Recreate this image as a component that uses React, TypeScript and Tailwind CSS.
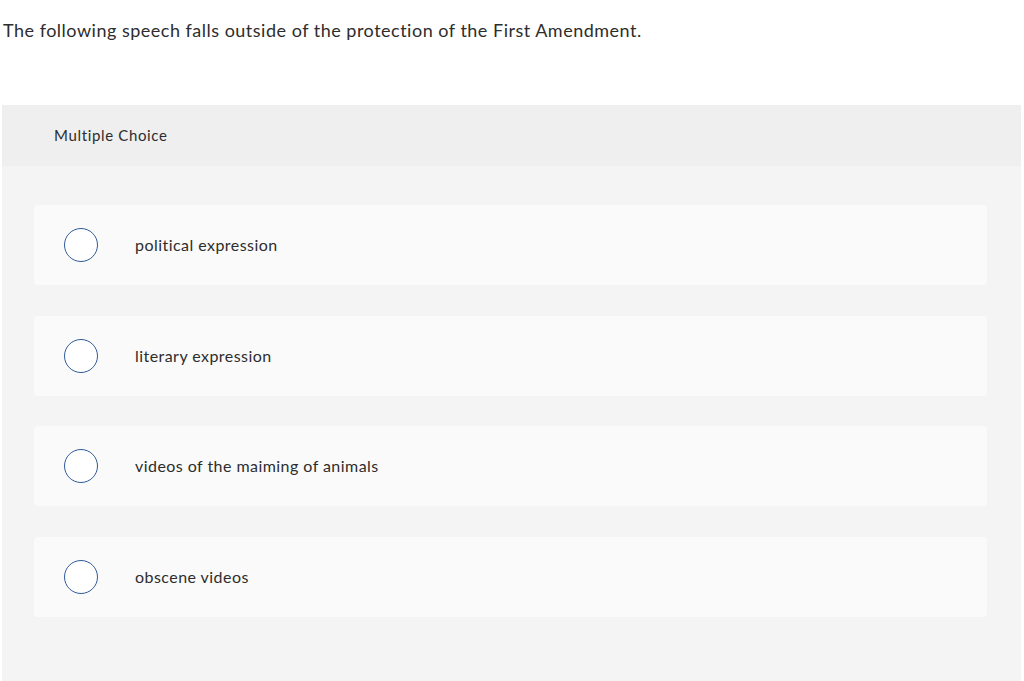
const OPTIONS = [
  "political expression",
  "literary expression",
  "videos of the maiming of animals",
  "obscene videos",
];

export default function App() {
  return (
    <div className="min-h-[681px] bg-white font-['Lato','Liberation_Sans',sans-serif] text-[#2d2d2d]">
      {/* Question */}
      <p className="pl-[3px] pt-[19px] text-[18px] leading-[22px] tracking-[0.5px]">
        The following speech falls outside of the protection of the First Amendment.
      </p>

      {/* Answer panel */}
      <div className="mt-[64px] ml-[2px] mr-[3px] bg-[#f4f4f4] min-h-[576px]">
        <div className="h-[61px] bg-[#efefef] flex items-center pl-[52px] text-[15px] tracking-[0.65px]">
          Multiple Choice
        </div>

        <div className="flex flex-col gap-[30.5px] pt-[39px] pl-[32px] pr-[34px] pb-[60px]">
          {OPTIONS.map((opt) => (
            <label
              key={opt}
              className="h-[80px] rounded bg-[#fafafa] flex items-center cursor-pointer"
            >
              <span className="ml-[30px] w-[34px] h-[34px] rounded-full border-[1.5px] border-[#2f5b9a] bg-white shrink-0" />
              <span className="ml-[37px] text-[16px] tracking-[0.45px]">{opt}</span>
            </label>
          ))}
        </div>
      </div>
    </div>
  );
}
